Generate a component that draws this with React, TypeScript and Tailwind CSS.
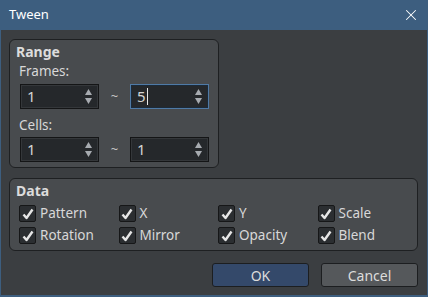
import { X } from "lucide-react";

function Spin({ value, focused, caret }: { value: string; focused?: boolean; caret?: boolean }) {
  return (
    <div
      className={
        "flex h-[25px] w-[79px] items-center justify-between border bg-[#25282b] pl-[6px] pr-[6px] " +
        (focused ? "border-[#4f7aa6] shadow-[inset_0_0_0_1px_#1c2a38]" : "border-[#141516] shadow-[inset_0_0_0_1px_#34373a]")
      }
    >
      <span className="flex items-center text-[15px] leading-none text-[#d4d4d4]">
        {value}
        {caret && <span className="ml-[1px] inline-block h-[17px] w-px bg-[#e8e8e8]" />}
      </span>
      <span className="flex flex-col gap-[3px]">
        <svg width="7" height="6" viewBox="0 0 7 6">
          <path d="M3.5 0 L7 6 L0 6 Z" fill="#a7abb0" />
        </svg>
        <svg width="7" height="6" viewBox="0 0 7 6">
          <path d="M0 0 L7 0 L3.5 6 Z" fill="#a7abb0" />
        </svg>
      </span>
    </div>
  );
}

function Check({ label }: { label: string }) {
  return (
    <div className="flex w-[100px] items-center gap-[4px]">
      <span className="flex h-[17px] w-[17px] items-center justify-center rounded-[2px] border border-[#161718] bg-[#2b2e31]">
        <svg width="12" height="12" viewBox="0 0 12 12">
          <path d="M1.5 6.5 L4.5 10 L10.5 1.5" fill="none" stroke="#e6e6e6" strokeWidth="2.4" strokeLinejoin="round" />
        </svg>
      </span>
      <span className="text-[13.5px] leading-none text-[#d8d8d8]">{label}</span>
    </div>
  );
}

export default function App() {
  return (
    <div
      className="flex h-[297px] w-[428px] flex-col border-x border-b-2 border-[#3d5e7f] bg-[#3b3e41] select-none"
      style={{ fontFamily: '"Noto Sans", "Open Sans", sans-serif' }}
    >
      {/* title bar */}
      <div className="flex h-[30px] shrink-0 items-center justify-between bg-[#3d5e7f] pl-[8px] pr-[7px]">
        <span className="text-[13px] text-white">Tween</span>
        <X size={18} strokeWidth={1.4} className="text-white" />
      </div>

      <div className="flex flex-1 flex-col pl-[8px] pr-[9px] pt-[9px]">
        {/* Range */}
        <div className="h-[129px] w-[210px] rounded-[6px] border border-[#1e2022] bg-[#484b4e] pl-[6px] pt-[3px]">
          <div className="text-[14px] font-bold leading-[18px] text-[#dcdcdc]">Range</div>
          <div className="mt-[2px] pl-[3px] text-[13.5px] leading-[16px] text-[#d8d8d8]">Frames:</div>
          <div className="mt-[5px] flex items-center pl-[4px]">
            <Spin value="1" />
            <span className="w-[31px] text-center text-[13px] text-[#c8c8c8]">~</span>
            <Spin value="5" focused caret />
          </div>
          <div className="mt-[8px] pl-[3px] text-[13.5px] leading-[16px] text-[#d8d8d8]">Cells:</div>
          <div className="mt-[4px] flex items-center pl-[4px]">
            <Spin value="1" />
            <span className="w-[31px] text-center text-[13px] text-[#c8c8c8]">~</span>
            <Spin value="1" />
          </div>
        </div>

        {/* Data */}
        <div className="mt-[10px] h-[73px] w-full rounded-[6px] border border-[#1e2022] bg-[#484b4e] pl-[6px] pt-[3px]">
          <div className="text-[14px] font-bold leading-[18px] text-[#dcdcdc]">Data</div>
          <div className="mt-[5px] grid grid-cols-4 gap-y-[5px] pl-[3px]">
            <Check label="Pattern" />
            <Check label="X" />
            <Check label="Y" />
            <Check label="Scale" />
            <Check label="Rotation" />
            <Check label="Mirror" />
            <Check label="Opacity" />
            <Check label="Blend" />
          </div>
        </div>

        {/* buttons */}
        <div className="mt-[12px] flex justify-end gap-[12px]">
          <button className="h-[24px] w-[97px] rounded-[3px] border border-[#1c1e20] bg-[#34496a] text-[14px] text-[#dcdcdc]">
            OK
          </button>
          <button className="h-[24px] w-[97px] rounded-[3px] border border-[#1c1e20] bg-[#55585b] text-[14px] text-[#dcdcdc]">
            Cancel
          </button>
        </div>
      </div>
    </div>
  );
}
